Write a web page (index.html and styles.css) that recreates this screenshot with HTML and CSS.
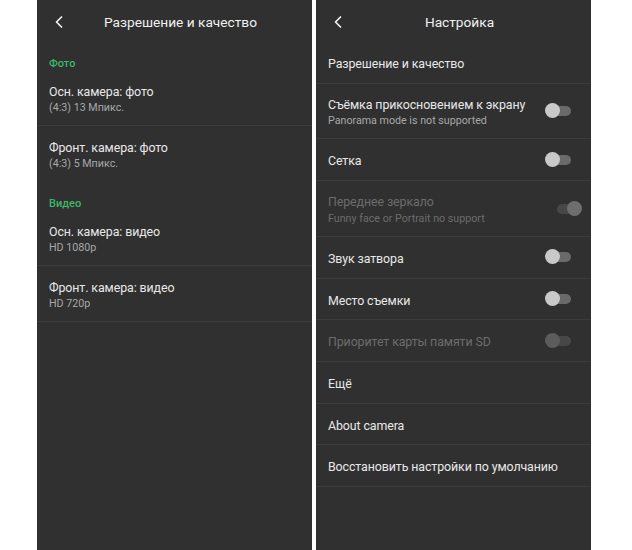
FILE: index.html
```html
<!DOCTYPE html>
<html lang="ru">
<head>
<meta charset="utf-8">
<title>Камера</title>
<link rel="stylesheet" href="styles.css">
</head>
<body>
<div class="screens">
  <section class="panel">
    <header class="bar">
      <svg class="back" width="8" height="12" viewBox="0 0 8 12"><polyline points="6.5,1 1.5,6 6.5,11" fill="none" stroke="#f0f0f0" stroke-width="1.7" stroke-linecap="round" stroke-linejoin="round"/></svg>
      <h1 class="title">Разрешение и качество</h1>
    </header>
    <div class="section">Фото</div>
    <div class="row two">
      <div class="text"><div class="main">Осн. камера: фото</div><div class="sub">(4:3) 13 Мпикс.</div></div>
    </div>
    <div class="row two last">
      <div class="text"><div class="main">Фронт. камера: фото</div><div class="sub">(4:3) 5 Мпикс.</div></div>
    </div>
    <div class="section">Видео</div>
    <div class="row two">
      <div class="text"><div class="main">Осн. камера: видео</div><div class="sub">HD 1080p</div></div>
    </div>
    <div class="row two">
      <div class="text"><div class="main">Фронт. камера: видео</div><div class="sub">HD 720p</div></div>
    </div>
  </section>

  <section class="panel">
    <header class="bar">
      <svg class="back" width="8" height="12" viewBox="0 0 8 12"><polyline points="6.5,1 1.5,6 6.5,11" fill="none" stroke="#f0f0f0" stroke-width="1.7" stroke-linecap="round" stroke-linejoin="round"/></svg>
      <h1 class="title">Настройка</h1>
    </header>
    <div class="row one"><div class="text"><div class="main">Разрешение и качество</div></div></div>
    <div class="row two">
      <div class="text"><div class="main">Съёмка прикосновением к экрану</div><div class="sub">Panorama mode is not supported</div></div>
      <span class="switch"><span class="track"></span><span class="thumb"></span></span>
    </div>
    <div class="row one">
      <div class="text"><div class="main">Сетка</div></div>
      <span class="switch"><span class="track"></span><span class="thumb"></span></span>
    </div>
    <div class="row two disabled">
      <div class="text"><div class="main">Переднее зеркало</div><div class="sub">Funny face or Portrait no support</div></div>
      <span class="switch on"><span class="track"></span><span class="thumb"></span></span>
    </div>
    <div class="row one">
      <div class="text"><div class="main">Звук затвора</div></div>
      <span class="switch"><span class="track"></span><span class="thumb"></span></span>
    </div>
    <div class="row one">
      <div class="text"><div class="main">Место съемки</div></div>
      <span class="switch"><span class="track"></span><span class="thumb"></span></span>
    </div>
    <div class="row one disabled">
      <div class="text"><div class="main">Приоритет карты памяти SD</div></div>
      <span class="switch"><span class="track"></span><span class="thumb"></span></span>
    </div>
    <div class="row one"><div class="text"><div class="main">Ещё</div></div></div>
    <div class="row one"><div class="text"><div class="main">About camera</div></div></div>
    <div class="row one"><div class="text"><div class="main">Восстановить настройки по умолчанию</div></div></div>
  </section>
</div>
</body>
</html>
```

FILE: styles.css
```css
html, body {
  margin: 0;
  padding: 0;
  background: #ffffff;
}
body {
  font-family: Roboto, "Noto Sans", "Liberation Sans", sans-serif;
}
.screens {
  display: flex;
  gap: 4px;
  padding-left: 37px;
  height: 550px;
}
.panel {
  width: 275px;
  height: 550px;
  background: #303030;
  display: flex;
  flex-direction: column;
  overflow: hidden;
}
.bar {
  height: 42px;
  box-sizing: border-box;
  padding-top: 2px;
  display: grid;
  align-items: center;
  padding-left: 12px;
  flex: none;
}
.back {
  grid-area: 1 / 1;
  justify-self: start;
  margin-left: 6px;
}
.title {
  grid-area: 1 / 1;
  justify-self: center;
  margin: 0;
  font-size: 13.7px;
  font-weight: 400;
  color: #f0f0f0;
  line-height: 18px;
}
.section {
  height: 28.5px;
  box-sizing: border-box;
  padding: 15px 12px 0;
  font-size: 11px;
  line-height: 14px;
  font-weight: 500;
  color: #3cb868;
  flex: none;
}
.row {
  display: flex;
  align-items: center;
  padding: 0 12px;
  box-sizing: border-box;
  border-bottom: 1px solid #3c3c3c;
  flex: none;
}
.row.one { height: 41.7px; }
.row.two { height: 55.8px; }
.row.last { border-bottom: none; }
.text {
  flex: 1;
  min-width: 0;
  padding-top: 2px;
}
.row.two .text { padding-top: 3px; }
.main {
  font-size: 12.4px;
  letter-spacing: -0.1px;
  line-height: 15px;
  color: #e8e8e8;
  white-space: nowrap;
}
.sub {
  font-size: 10.7px;
  line-height: 15px;
  margin-top: 1.5px;
  color: #a8a8a8;
  white-space: nowrap;
}
.disabled .main,
.disabled .sub {
  color: #6c6c6c;
}
.switch {
  position: relative;
  width: 31px;
  height: 16px;
  flex: none;
  margin-right: 3px;
}
.track {
  position: absolute;
  left: 6px;
  top: 3px;
  width: 20px;
  height: 10px;
  border-radius: 5px;
  background: #6a6a6a;
}
.thumb {
  position: absolute;
  left: 0;
  top: 0;
  width: 15px;
  height: 15px;
  border-radius: 50%;
  background: #c9c9c9;
}
.switch.on .thumb { left: 16px; }
.switch.on { margin-right: -3px; }
.disabled .track { background: #474747; }
.disabled .thumb { background: #5c5c5c; }
.disabled .switch.on .thumb { background: #6e6e6e; }
```
